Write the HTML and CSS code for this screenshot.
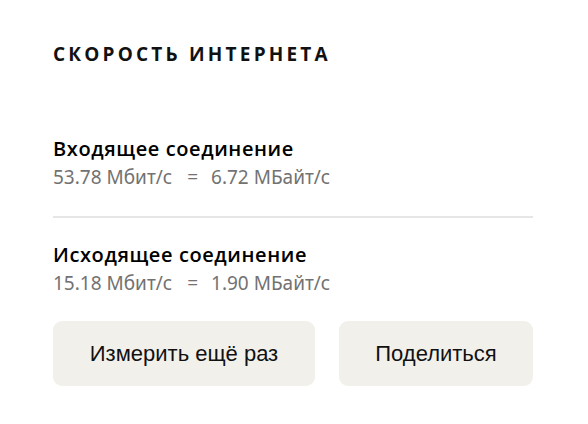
FILE: index.html
```html
<!DOCTYPE html>
<html lang="ru">
<head>
<meta charset="utf-8">
<link rel="stylesheet" href="styles.css">
</head>
<body>
<div class="card">
  <h1 class="title">СКОРОСТЬ ИНТЕРНЕТА</h1>
  <div class="section">
    <div class="label">Входящее соединение</div>
    <div class="value"><span>53.78 Мбит/с</span><span class="eq">=</span><span>6.72 МБайт/с</span></div>
  </div>
  <div class="divider"></div>
  <div class="section second">
    <div class="label">Исходящее соединение</div>
    <div class="value"><span>15.18 Мбит/с</span><span class="eq">=</span><span>1.90 МБайт/с</span></div>
  </div>
  <div class="buttons">
    <button class="btn btn-wide">Измерить ещё раз</button>
    <button class="btn btn-narrow">Поделиться</button>
  </div>
</div>
</body>
</html>
```

FILE: styles.css
```css
html, body {
  margin: 0;
  padding: 0;
  background: #ffffff;
}
.card {
  padding: 42px 55px 0 53px;
  width: 480px;
}
.title {
  margin: 0;
  font-family: "Open Sans", sans-serif;
  font-weight: 700;
  font-size: 19px;
  letter-spacing: 3.2px;
  line-height: 24px;
  color: #111;
}
.section {
  margin-top: 70px;
}
.section.second {
  margin-top: 24px;
}
.label {
  font-family: "Open Sans", sans-serif;
  font-weight: 600;
  font-size: 20px;
  letter-spacing: 0.6px;
  line-height: 26px;
  color: #000;
}
.value {
  font-family: "Noto Sans", sans-serif;
  font-weight: 400;
  font-size: 19px;
  line-height: 30px;
  color: #727272;
  display: flex;
}
.eq {
  margin: 0 13px 0 15px;
}
.divider {
  height: 2px;
  background: #e6e6e6;
  margin-top: 24px;
}
.buttons {
  display: flex;
  gap: 24px;
  margin-top: 23px;
}
.btn {
  height: 65px;
  border: none;
  border-radius: 9px;
  background: #f2f0eb;
  font-family: "Liberation Sans", Arial, sans-serif;
  font-size: 22px;
  color: #111;
  padding: 0;
}
.btn-wide { width: 262px; }
.btn-narrow { width: 194px; }
```
